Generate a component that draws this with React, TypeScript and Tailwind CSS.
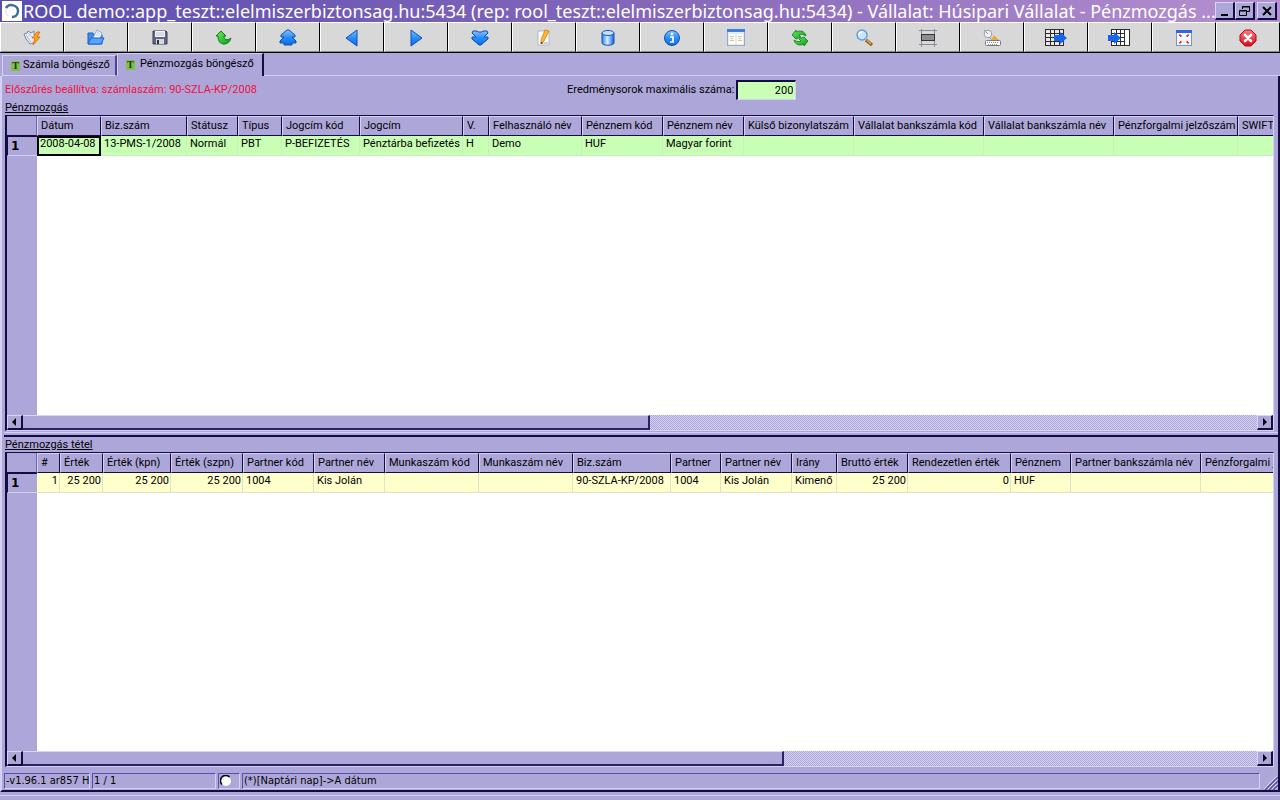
import React from "react";

interface Column {
  title: string;
  width: number;
  value?: string;
  right?: boolean;
}

const paymentColumns: Column[] = [
  { title: "Dátum", width: 64, value: "2008-04-08" },
  { title: "Biz.szám", width: 86, value: "13-PMS-1/2008" },
  { title: "Státusz", width: 51, value: "Normál" },
  { title: "Típus", width: 44, value: "PBT" },
  { title: "Jogcím kód", width: 78, value: "P-BEFIZETÉS" },
  { title: "Jogcím", width: 103, value: "Pénztárba befizetés" },
  { title: "V.", width: 26, value: "H" },
  { title: "Felhasználó név", width: 93, value: "Demo" },
  { title: "Pénznem kód", width: 81, value: "HUF" },
  { title: "Pénznem név", width: 81, value: "Magyar forint" },
  { title: "Külső bizonylatszám", width: 110 },
  { title: "Vállalat bankszámla kód", width: 130 },
  { title: "Vállalat bankszámla név", width: 130 },
  { title: "Pénzforgalmi jelzőszám", width: 124 },
  { title: "SWIFT", width: 100 },
];

const itemColumns: Column[] = [
  { title: "#", width: 23, value: "1", right: true },
  { title: "Érték", width: 43, value: "25 200", right: true },
  { title: "Érték (kpn)", width: 68, value: "25 200", right: true },
  { title: "Érték (szpn)", width: 72, value: "25 200", right: true },
  { title: "Partner kód", width: 71, value: "1004" },
  { title: "Partner név", width: 71, value: "Kis Jolán" },
  { title: "Munkaszám kód", width: 94 },
  { title: "Munkaszám név", width: 94 },
  { title: "Biz.szám", width: 98, value: "90-SZLA-KP/2008" },
  { title: "Partner", width: 50, value: "1004" },
  { title: "Partner név", width: 71, value: "Kis Jolán" },
  { title: "Irány", width: 45, value: "Kimenő" },
  { title: "Bruttó érték", width: 71, value: "25 200", right: true },
  { title: "Rendezetlen érték", width: 103, value: "0", right: true },
  { title: "Pénznem", width: 60, value: "HUF" },
  { title: "Partner bankszámla név", width: 130 },
  { title: "Pénzforgalmi jelzőszám", width: 130 },
];

const Gradients: React.FC = () => (
  <svg className="absolute h-0 w-0" aria-hidden="true">
    <defs>
      <linearGradient id="blue" x1="0" y1="0" x2="0" y2="1">
        <stop offset="0" stopColor="#7cc4ff" />
        <stop offset="0.5" stopColor="#2b8cf8" />
        <stop offset="1" stopColor="#0a6cf0" />
      </linearGradient>
      <linearGradient id="blueSide" x1="0" y1="0" x2="1" y2="0">
        <stop offset="0" stopColor="#2a7ee8" />
        <stop offset="0.45" stopColor="#d8efff" />
        <stop offset="1" stopColor="#0a5fe0" />
      </linearGradient>
      <linearGradient id="green" x1="0" y1="0" x2="1" y2="1">
        <stop offset="0" stopColor="#6af05a" />
        <stop offset="1" stopColor="#0a9a1a" />
      </linearGradient>
      <linearGradient id="red" x1="0" y1="0" x2="0" y2="1">
        <stop offset="0" stopColor="#ff7a7a" />
        <stop offset="1" stopColor="#d80a1c" />
      </linearGradient>
    </defs>
  </svg>
);

const tools: { label: string; art: React.ReactNode }[] = [
  {
    label: "Kapcsolat",
    art: (
      <>
        <path d="M1 5l3-1 1-2 3 2 3-2v3l2 4-1 4-5 2-4-5z" fill="#e6e9f4" stroke="#7d86a4" />
        <path d="M3 6l5 7M5 4l5 5" stroke="#b5bbcf" />
        <path d="M14 3l-5 6h3l-2 7 7-8h-3l3-5z" fill="#ffa51e" stroke="#d9660a" strokeWidth="0.8" />
      </>
    ),
  },
  {
    label: "Megnyitás",
    art: (
      <>
        <path d="M1 4h5l1 2h8v9H1z" fill="#3d8af0" stroke="#1b5fc4" />
        <path d="M6 9l4-8 5 3-2 6z" fill="#f4f9ff" stroke="#6f9bdc" strokeWidth="0.8" />
        <path d="M10 3l3 2M9 5l3 2" stroke="#a9c8f0" />
        <path d="M4 9h13l-3 6H1z" fill="#5aa6ff" stroke="#1b62d0" />
      </>
    ),
  },
  {
    label: "Mentés",
    art: (
      <>
        <path d="M2 2h13l1 1v12H2z" fill="#5f6480" stroke="#3a3e58" />
        <rect x="4" y="2" width="10" height="6" fill="#f4f6fb" />
        <path d="M5 4h8M5 6h8" stroke="#b9bed0" />
        <rect x="5" y="10" width="8" height="5" fill="#d5d8e4" />
        <rect x="6" y="11" width="2" height="4" fill="#2c3048" />
      </>
    ),
  },
  {
    label: "Visszavonás",
    art: (
      <path d="M1 7l5-5 5 5H9c0 4 3 5 7 2-1 4-4 6-7 6-4 0-6-3-6-8z" fill="url(#green)" stroke="#0a7a18" strokeLinejoin="round" />
    ),
  },
  {
    label: "Első",
    art: (
      <path d="M8 1h2l6 5v2h-3l4 4v2h-4v2H5v-2H1v-2l4-4H2V6z" fill="url(#blue)" stroke="#0d4fae" strokeLinejoin="round" />
    ),
  },
  { label: "Előző", art: <path d="M3 9l11-8v16z" fill="url(#blue)" stroke="#0d4fae" strokeLinejoin="round" /> },
  { label: "Következő", art: <path d="M15 9L4 1v16z" fill="url(#blue)" stroke="#0d4fae" strokeLinejoin="round" /> },
  {
    label: "Utolsó",
    art: (
      <path d="M2 2h4l1 1h4l1-1h4l1 2-4 4h4v2l-7 6H8l-7-6V8h4L1 4z" fill="url(#blue)" stroke="#0d4fae" strokeLinejoin="round" />
    ),
  },
  {
    label: "Szerkesztés",
    art: (
      <>
        <path d="M3 2h11v14H3z" fill="#fff" stroke="#b4b4c4" />
        <path d="M5 14h8" stroke="#8ea4d8" />
        <path d="M10 1l4 1-5 10-3 3v-4z" fill="#ffb52e" stroke="#d07d12" strokeWidth="0.8" />
        <path d="M6 13v2l2-1z" fill="#333" />
      </>
    ),
  },
  {
    label: "Adatbázis",
    art: (
      <>
        <path d="M3 4v10c0 3 12 3 12 0V4z" fill="url(#blueSide)" stroke="#1258b8" />
        <ellipse cx="9" cy="4" rx="6" ry="2.5" fill="#bfe2ff" stroke="#1258b8" />
      </>
    ),
  },
  {
    label: "Információ",
    art: (
      <>
        <circle cx="9" cy="9" r="7.5" fill="url(#blue)" stroke="#0d4fae" />
        <circle cx="9" cy="5" r="1.4" fill="#fff" />
        <path d="M7 8h3v5h1M7 13h4" stroke="#fff" strokeWidth="1.6" fill="none" />
      </>
    ),
  },
  {
    label: "Oszlopok",
    art: (
      <>
        <rect x="0.5" y="0.5" width="17" height="16" fill="#e6eaf4" stroke="#9aa8c8" />
        <rect x="0" y="0" width="18" height="3" fill="#3f7fdc" />
        <rect x="2" y="5" width="6" height="10" fill="#fffdf2" />
        <rect x="10" y="5" width="6" height="10" fill="#fffdf2" />
        <path d="M3 7.500h4M3 9.500h3M3 11.500h4M11 7.500h4M11 9.500h3M11 11.500h4" stroke="#cfc8a8" />
      </>
    ),
  },
  {
    label: "Frissítés",
    art: (
      <>
        <path d="M1 6l4-5v2c4-2 9-1 10 4-3-2-5-2-7-1l2 2-5 2-4-4z" fill="url(#green)" stroke="#0a7a18" strokeWidth="0.8" />
        <path d="M17 12l-4 5v-2c-4 2-9 1-10-4 3 2 5 2 7 1l-2-2 5-2 4 4z" fill="url(#green)" stroke="#0a7a18" strokeWidth="0.8" />
      </>
    ),
  },
  {
    label: "Keresés",
    art: (
      <>
        <path d="M11 11l6 5" stroke="#8a5a1e" strokeWidth="3.4" />
        <path d="M12 11l4 4" stroke="#e8a850" strokeWidth="1.6" />
        <circle cx="7" cy="6" r="5" fill="#c4e8ff" stroke="#6a9cd0" strokeWidth="1.5" />
        <path d="M4 6c0-2 1-3 3-3" stroke="#fff" strokeWidth="1.4" fill="none" />
      </>
    ),
  },
  {
    label: "Méret",
    art: (
      <>
        <path d="M2.5 0v18M15.5 0v18M0 1.5h18M0 15.5h18" stroke="#8b8ba0" />
        <rect x="2.5" y="5.5" width="13" height="6" fill="#8e8e8e" stroke="#333" />
      </>
    ),
  },
  {
    label: "Billentyűk",
    art: (
      <>
        <circle cx="5" cy="5" r="3.8" fill="#eef0f4" stroke="#9aa0ac" />
        <path d="M1 1l4 4M6 8l3 3" stroke="#8f94a4" />
        <path d="M8 11l3-5 5 5z" fill="#f0a83c" />
        <rect x="2.5" y="11.5" width="15" height="5" rx="1" fill="#fbfbfb" stroke="#77777f" />
        <path d="M4 13.5h12M5 15.5h10" stroke="#8a8a8a" strokeDasharray="1 1" />
      </>
    ),
  },
  {
    label: "Export",
    art: (
      <>
        <rect x="-2" y="0" width="18" height="17" fill="#e8e8e8" />
        <path d="M-2 0.5h19M-2 4.5h19M-2 8.5h19M-2 12.5h19M-2 16.5h19M-1.5 0v17M3.5 0v17M7.5 0v17M12.5 0v17M16.5 0v17" stroke="#2b2b2b" />
        <path d="M7 6h6V3l7 6-7 6v-3H7z" fill="#1664f0" />
      </>
    ),
  },
  {
    label: "Import",
    art: (
      <>
        <rect x="1" y="0" width="18" height="17" fill="#fff" />
        <path d="M0 0.5h19M0 4.5h14M0 8.5h14M0 12.5h14M0 16.5h19M0.5 0v17M5.5 0v17M9.5 0v17M13.5 0v17M18.5 0v17" stroke="#2b2b2b" />
        <path d="M-3 6h6V3l7 6-7 6v-3h-6z" fill="#1664f0" />
      </>
    ),
  },
  {
    label: "Teljes képernyő",
    art: (
      <>
        <rect x="1.5" y="1.5" width="15" height="15" fill="#f4f6ff" stroke="#7a94d0" />
        <rect x="1" y="1" width="16" height="3" fill="#2c6ae0" />
        <path d="M4 6h2v2zM14 6h-2v2zM4 14h2v-2zM14 14h-2v-2z" fill="#e03a2e" stroke="#e03a2e" />
      </>
    ),
  },
  {
    label: "Kilépés",
    art: (
      <>
        <path d="M6 1h6l5 5v6l-5 5H6l-5-5V6z" fill="url(#red)" stroke="#b00818" />
        <path d="M6 6l6 6M12 6l-6 6" stroke="#fff" strokeWidth="2.6" strokeLinecap="round" />
      </>
    ),
  },
];

const TitleBar: React.FC = () => {
  const button =
    "flex h-[18px] w-5 items-center justify-center border-t border-l border-r-2 border-b-2 border-t-[#d9d5f8] border-l-[#d9d5f8] border-r-[#120c40] border-b-[#120c40] bg-[#ada7d9]";
  return (
    <header className="flex h-[22px] shrink-0 items-center bg-linear-to-r from-[#5a4db2] via-[#8467b9] to-[#b690d0] pr-[3px] pl-[2px]">
      <svg width="20" height="20" viewBox="0 0 20 20" className="shrink-0" aria-hidden="true">
        <rect width="20" height="20" fill="#fff" />
        <path d="M4 7c3-5 12-3 12 3 0 4-3 6-6 6" fill="none" stroke="#3f6f94" strokeWidth="2.5" />
        <path d="M4 8c-1 3 0 6 3 7" fill="none" stroke="#e3eaf0" strokeWidth="1.5" />
      </svg>
      <h1 className="min-w-0 flex-1 overflow-hidden pl-px font-['Noto_Sans','DejaVu_Sans',sans-serif] text-[18px] leading-[22px] whitespace-nowrap text-white">
        ROOL demo::app_teszt::elelmiszerbiztonsag.hu:5434 (rep: rool_teszt::elelmiszerbiztonsag.hu:5434) - Vállalat: Húsipari Vállalat - Pénzmozgás ...
      </h1>
      <div className="flex shrink-0">
        <button className={button} aria-label="Kis méret">
          <svg width="14" height="12" viewBox="0 0 14 12">
            <rect x="3" y="9" width="7" height="2" fill="#000" />
          </svg>
        </button>
        <button className={button} aria-label="Előző méret">
          <svg width="14" height="12" viewBox="0 0 14 12" fill="none" stroke="#000">
            <path d="M4.5 4V1.5h7v5H9M4 2h8" />
            <path d="M1.5 5.5h7v5h-7zM1 6h8" />
          </svg>
        </button>
        <button className={`${button} ml-[2px]`} aria-label="Bezárás">
          <svg width="14" height="12" viewBox="0 0 14 12">
            <path d="M3 2l8 8M11 2l-8 8" stroke="#000" strokeWidth="2" />
          </svg>
        </button>
      </div>
    </header>
  );
};

const Toolbar: React.FC = () => (
  <div role="toolbar" className="grid h-[31px] shrink-0 grid-cols-20 bg-black pb-px">
    {tools.map((tool) => (
      <button
        key={tool.label}
        aria-label={tool.label}
        className="flex items-center justify-center border-t border-r border-b border-l border-t-white border-r-black border-b-[#8a8a8a] border-l-white bg-[#d8d8d8] pt-px"
      >
        <svg width="18" height="18" viewBox="0 0 18 18" fill="none" className="overflow-visible">
          {tool.art}
        </svg>
      </button>
    ))}
  </div>
);

const TabIcon: React.FC = () => (
  <span
    aria-hidden="true"
    className="flex h-[10px] w-[9px] items-center justify-center bg-[#7fbf4d] font-['Liberation_Serif',serif] text-[10px] leading-[10px] font-bold text-[#173a0c]"
  >
    T
  </span>
);

const Tabs: React.FC = () => (
  <div role="tablist" className="flex h-[23px] shrink-0 items-end pl-[2px]">
    <button
      role="tab"
      aria-selected="false"
      className="flex h-[21px] items-center gap-[3px] border-t border-r-2 border-b border-l border-t-[#d5d1f5] border-r-[#4b3f96] border-b-[#d5d1f5] border-l-[#d5d1f5] pr-[5px] pl-2"
    >
      <TabIcon />
      Számla böngésző
    </button>
    <button
      role="tab"
      aria-selected="true"
      className="flex h-[23px] items-center gap-[5px] border-t border-r-2 border-l border-t-[#d5d1f5] border-r-[#120c40] border-l-[#d5d1f5] pr-2 pb-px pl-2"
    >
      <TabIcon />
      Pénzmozgás böngésző
    </button>
    <div className="flex-1 self-stretch border-b border-[#d5d1f5]" />
  </div>
);

const ScrollBar: React.FC<{ size: number }> = ({ size }) => {
  const arrow =
    "flex h-full w-4 shrink-0 items-center justify-center border-t border-l border-r-2 border-b-2 border-t-[#d9d5f8] border-l-[#d9d5f8] border-r-[#120c40] border-b-[#120c40] bg-[#ada7d9]";
  return (
    <div className="flex h-[15px] shrink-0 bg-[repeating-conic-gradient(#d3cff0_0_25%,#aea8da_0_50%)] bg-size-[2px_2px]">
      <button className={arrow} aria-label="Balra">
        <svg width="5" height="8" viewBox="0 0 5 8">
          <path d="M4 0v8L0 4z" fill="#000" />
        </svg>
      </button>
      <div className="flex-1">
        <div
          className="h-full border-t border-r-2 border-b-2 border-t-[#d9d5f8] border-r-[#2a2068] border-b-[#2a2068] bg-[#ada7d9]"
          style={{ width: `${size}%` }}
        />
      </div>
      <button className={arrow} aria-label="Jobbra">
        <svg width="5" height="8" viewBox="0 0 5 8">
          <path d="M1 0v8l4-4z" fill="#000" />
        </svg>
      </button>
    </div>
  );
};

interface GridProps {
  columns: Column[];
  rowClass: string;
  cellBorder: string;
  scroll: number;
  selected?: boolean;
  label: string;
}

const DataGrid: React.FC<GridProps> = ({ columns, rowClass, cellBorder, scroll, selected, label }) => {
  const total = columns.reduce((sum, c) => sum + c.width, 30);

  return (
    <div className="flex min-h-0 flex-1 flex-col overflow-hidden border-t border-r border-b border-l-2 border-t-[#120c40] border-r-[#d5d1f5] border-b-[#d5d1f5] border-l-[#120c40]">
      <div className="flex min-h-0 flex-1 flex-col overflow-hidden bg-white">
        <table aria-label={label} className="shrink-0 table-fixed border-separate border-spacing-0 text-left" style={{ width: total }}>
          <colgroup>
            <col style={{ width: 30 }} />
            {columns.map((c, i) => (
              <col key={i} style={{ width: c.width }} />
            ))}
          </colgroup>
          <thead>
            <tr className="h-5 bg-[#ada7d9]">
              <th className="border-r border-b border-r-[#6f66b0] border-b-[#120c40] p-0" />
              {columns.map((c, i) => (
                <th
                  key={i}
                  className="overflow-hidden border-t border-r border-b border-l border-t-[#d5d1f5] border-r-[#120c40] border-b-[#120c40] border-l-[#d5d1f5] py-0 pr-0 pl-[3px] leading-[18px] font-normal whitespace-nowrap"
                >
                  {c.title}
                </th>
              ))}
            </tr>
          </thead>
          <tbody>
            <tr className={`h-5 ${rowClass}`}>
              <th className="border-t border-b border-l border-t-[#120c40] border-b-[#d5d1f5] border-l-[#120c40] bg-[#ada7d9] py-0 pl-[3px] font-['DejaVu_Sans',sans-serif] text-[12px] leading-[18px] font-bold">
                1
              </th>
              {columns.map((c, i) => (
                <td
                  key={i}
                  className={
                    selected && i === 0
                      ? "overflow-hidden border-2 border-black px-px py-0 align-top leading-[12px] whitespace-nowrap"
                      : `overflow-hidden border-r border-b py-0 pr-px pl-[3px] align-top leading-[15px] whitespace-nowrap ${cellBorder} ${c.right ? "text-right" : ""}`
                  }
                >
                  {c.value}
                </td>
              ))}
            </tr>
          </tbody>
        </table>
        <div className="w-[30px] flex-1 bg-[#ada7d9]" />
      </div>
      <ScrollBar size={scroll} />
    </div>
  );
};

const StatusBar: React.FC = () => {
  const panel =
    "flex h-4 items-center overflow-hidden border border-t-[#5b4ca8] border-r-[#d5d1f5] border-b-[#d5d1f5] border-l-[#5b4ca8] px-px whitespace-nowrap";
  return (
    <footer className="flex h-[17px] shrink-0 items-start gap-[2px] font-['DejaVu_Sans_Condensed','DejaVu_Sans',sans-serif]">
      <div className={`${panel} w-[86px]`}>-v1.96.1 ar857 H</div>
      <div className={`${panel} w-[124px]`}>1 / 1</div>
      <div className={`${panel} w-[22px]`}>
        <svg width="12" height="12" viewBox="0 0 12 12" aria-hidden="true">
          <circle cx="6" cy="6" r="5" fill="#fff" />
          <path d="M2 9.5A5 5 0 0 1 9.5 2" fill="none" stroke="#000" strokeWidth="1.5" />
        </svg>
      </div>
      <div className={`${panel} min-w-0 flex-1`}>(*)[Naptári nap]-&gt;A dátum</div>
      <svg width="14" height="14" viewBox="0 0 14 14" className="ml-[2px] shrink-0 self-end" aria-hidden="true">
        <path d="M1 14L14 1M5 14l9-9M9 14l5-5" stroke="#5b4ca8" strokeWidth="1.5" />
        <path d="M0 13L13 0M4 13l9-9M8 13l5-5" stroke="#e0dcfa" />
      </svg>
    </footer>
  );
};

const App: React.FC = () => {
  return (
    <div className="flex h-screen flex-col overflow-hidden bg-[#ada7d9] font-[Roboto,'Liberation_Sans',sans-serif] text-[11px] text-black">
      <Gradients />
      <TitleBar />
      <Toolbar />
      <Tabs />
      <main className="flex min-h-0 flex-1 flex-col border-r-2 border-b-2 border-l-2 border-r-[#120c40] border-b-[#120c40] border-l-[#d5d1f5] pl-[2px]">
        <div className="flex h-6 shrink-0 items-end pl-px">
          <p className="w-[562px] leading-5 text-[#f0103c]">Előszűrés beállítva: számlaszám: 90-SZLA-KP/2008</p>
          <label htmlFor="limit" className="leading-5">
            Eredménysorok maximális száma:
          </label>
          <input
            id="limit"
            defaultValue="200"
            className="ml-[2px] h-5 w-[60px] border-t-2 border-r border-b border-l-2 border-t-[#120c40] border-r-[#d5d1f5] border-b-[#d5d1f5] border-l-[#120c40] bg-[#c8ffb4] pr-[2px] text-right text-[11px]"
          />
        </div>
        <section className="flex min-h-0 flex-1 flex-col pr-1 pl-px">
          <h2 className="shrink-0 pt-px leading-[14px] underline">Pénzmozgás</h2>
          <DataGrid
            label="Pénzmozgás"
            columns={paymentColumns}
            rowClass="bg-[#c8ffb4]"
            cellBorder="border-[#c4f2bc]"
            scroll={50.8}
            selected
          />
        </section>
        <div className="mt-px h-px shrink-0 bg-[#d5d1f5]" />
        <hr className="mt-[2px] h-[2px] shrink-0 border-0 bg-[#120c40]" />
        <section className="flex min-h-0 flex-1 flex-col pr-1 pl-px">
          <h2 className="shrink-0 pt-px leading-[14px] underline">Pénzmozgás tétel</h2>
          <DataGrid
            label="Pénzmozgás tétel"
            columns={itemColumns}
            rowClass="bg-[#ffffcc]"
            cellBorder="border-[#e2e2c8]"
            scroll={61.7}
          />
        </section>
        <div className="h-[6px] shrink-0" />
        <StatusBar />
      </main>
      <div className="mt-[3px] h-[5px] shrink-0 border-t border-[#d5d1f5]" />
    </div>
  );
};

export default App;
